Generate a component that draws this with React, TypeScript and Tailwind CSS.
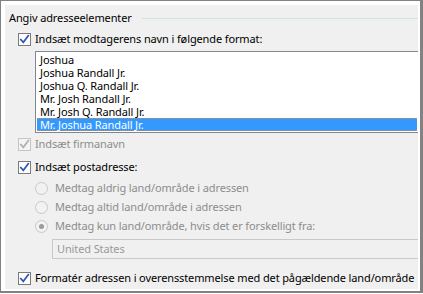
import React from "react";

function CheckBox({ disabled = false }: { disabled?: boolean }) {
  return (
    <span
      className={
        "relative flex h-[13px] w-[13px] shrink-0 items-center justify-center border " +
        (disabled ? "border-[#c5c5c5] bg-[#f4f4f4]" : "border-[#7a7a7a] bg-white")
      }
    >
      <svg width="11" height="11" viewBox="0 0 11 11">
        <path
          d="M1.8 5.6 L4.3 8.3 L9.3 1.6"
          fill="none"
          stroke={disabled ? "#b0b0b0" : "#3056b8"}
          strokeWidth="1.7"
          strokeLinecap="square"
        />
      </svg>
    </span>
  );
}

function Radio({ checked = false }: { checked?: boolean }) {
  return (
    <span className="flex h-[13px] w-[13px] shrink-0 items-center justify-center rounded-full border border-[#c8c8c8] bg-[#f2f2f2]">
      {checked && <span className="h-[5px] w-[5px] rounded-full bg-[#9a9a9a]" />}
    </span>
  );
}

export default function App() {
  const names = [
    "Joshua",
    "Joshua Randall Jr.",
    "Joshua Q. Randall Jr.",
    "Mr. Josh Randall Jr.",
    "Mr. Josh Q. Randall Jr.",
  ];
  return (
    <div
      className="h-[294px] w-[423px] overflow-hidden bg-white text-[11px] leading-[16px] tracking-[-0.12px] text-black"
      style={{ fontFamily: '"Noto Sans", "DejaVu Sans", sans-serif' }}
    >
      <div className="h-[293px] w-[423px] border-b-2 border-l border-r-[3px] border-t border-[#828282] bg-white p-[4px] pr-[2px] pb-[2px]">
        <div className="flex h-full flex-col bg-[#f0f0f0] pl-[4px]">
          {/* header */}
          <div className="mt-[5px] flex h-[16px] items-center">
            <span className="whitespace-nowrap">Angiv adresseelementer</span>
            <div className="ml-[10px] h-px flex-1 bg-[#d3e1e4]" />
          </div>
          {/* checkbox 1 */}
          <div className="ml-[9px] mt-[5px] flex h-[16px] items-center gap-[4px] whitespace-nowrap">
            <CheckBox />
            <span>Indsæt modtagerens navn i følgende format:</span>
          </div>
          {/* listbox */}
          <div className="ml-[26px] mt-[4px] border-y border-l border-[#828790] bg-white p-px">
            {names.map((n) => (
              <div key={n} className="h-[13px] whitespace-nowrap pl-[3px] leading-[13px]">
                {n}
              </div>
            ))}
            <div className="h-[13px] whitespace-nowrap border-y border-dotted border-[#d98a3a] bg-[#3399ff] pl-[3px] leading-[11px] text-white">
              Mr. Joshua Randall Jr.
            </div>
          </div>
          {/* firmanavn */}
          <div className="ml-[9px] mt-[3px] flex h-[16px] items-center gap-[4px] whitespace-nowrap text-[#8d8d8d]">
            <CheckBox disabled />
            <span>Indsæt firmanavn</span>
          </div>
          {/* postadresse */}
          <div className="ml-[9px] mt-[7px] flex h-[16px] items-center gap-[4px] whitespace-nowrap">
            <CheckBox />
            <span>Indsæt postadresse:</span>
          </div>
          {/* radios */}
          <div className="ml-[26px] mt-[5px] flex flex-col gap-[3px] text-[#8d8d8d]">
            <div className="flex h-[16px] items-center gap-[7px] whitespace-nowrap">
              <Radio />
              <span>Medtag aldrig land/område i adressen</span>
            </div>
            <div className="flex h-[16px] items-center gap-[7px] whitespace-nowrap">
              <Radio />
              <span>Medtag altid land/område i adressen</span>
            </div>
            <div className="flex h-[16px] items-center gap-[7px] whitespace-nowrap">
              <Radio checked />
              <span>Medtag kun land/område, hvis det er forskelligt fra:</span>
            </div>
          </div>
          {/* combo */}
          <div className="ml-[43px] mt-[5px] flex h-[20px] items-center border-y border-l border-[#c9c9c9] bg-[#f0f0f0] pl-[4px] text-[#9a9a9a]">
            United States
          </div>
          {/* last checkbox */}
          <div className="ml-[9px] mt-[11px] flex h-[16px] items-center gap-[4px] whitespace-nowrap">
            <CheckBox />
            <span>Formatér adressen i overensstemmelse med det pågældende land/område</span>
          </div>
        </div>
      </div>
    </div>
  );
}
